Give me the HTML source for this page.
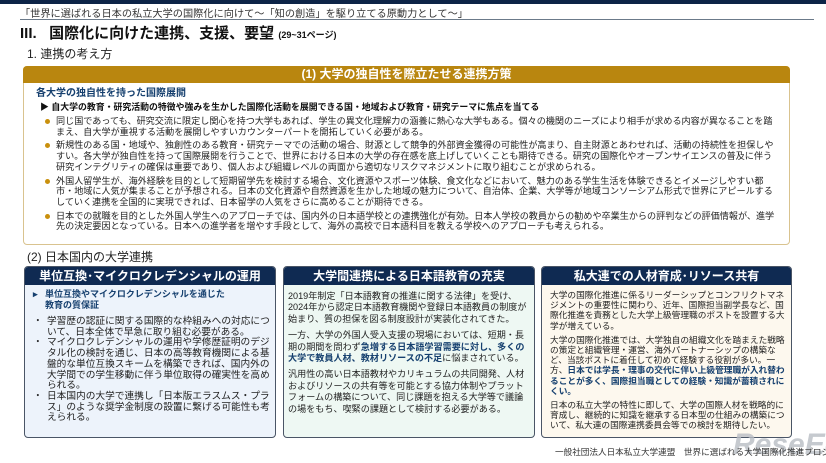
<!DOCTYPE html>
<html><head><meta charset="utf-8"><style>
*{margin:0;padding:0;box-sizing:border-box}
body{width:826px;height:463px;background:#fff;position:relative;overflow:hidden;font-family:"Liberation Sans","Noto Sans CJK JP",sans-serif;color:#222}
.abs{position:absolute}
.topbar{left:0;top:0;width:826px;height:4px;background:#0d2447}
.sub{left:20px;top:5px;font-size:10.2px;color:#333;white-space:nowrap}
.rule{left:20px;top:19px;width:794px;height:1px;background:#6b7a8a}
.h1{left:20px;top:22px;font-size:15px;font-weight:bold;color:#111;white-space:nowrap}
.h1 small{font-size:9px;font-weight:bold}
.h2{left:27px;top:45px;font-size:12px;color:#222;white-space:nowrap}
.gold{left:23px;top:66px;width:767px;height:179px;border:1px solid #d9c38f;border-radius:4px;background:#fff}
.goldh{left:23px;top:66px;width:767px;height:17px;background:#b9860f;border-radius:4px 4px 0 0;color:#fff;font-weight:bold;font-size:12px;text-align:center;line-height:17px}
.blue{color:#16406f;font-weight:bold}
.t1{left:36px;top:84px;font-size:10px}
.t2{left:40px;top:100px;font-size:8.9px;font-weight:bold;color:#111;white-space:nowrap}
ul.b{left:44px;top:116px;width:734px;list-style:none;font-size:9.1px;line-height:10.6px;color:#222}
ul.b li{position:relative;padding-left:12px;margin-bottom:3.3px}
ul.b li:before{content:"";position:absolute;left:1px;top:3px;width:5px;height:5px;border-radius:50%;background:#c9900d}
.h3{left:27px;top:248px;font-size:12px;white-space:nowrap}
.box{top:266px;height:172px;border:1px solid #4a5566;border-radius:4px;overflow:hidden}
.box .hd{height:18px;background:#0f2a52;color:#fff;font-weight:bold;font-size:12px;text-align:center;line-height:18px}
.b1{left:24px;width:252px;background:#edf3fb}
.b2{left:283px;width:252px;background:#eef8f3}
.b3{left:541px;width:251px;background:#fdf8ee}
.b1 .c{padding:4px 5px 0 8px;font-size:9.7px;line-height:10.7px}
.b1 .c .tri{font-weight:bold;color:#16406f;padding-left:12px;position:relative;margin-bottom:6px;font-size:9px;line-height:11px}
.b1 .c .tri:before{content:"▸";position:absolute;left:0;top:0;color:#16406f}
.b1 ul{list-style:none}
.b1 li{position:relative;padding-left:14px}
.b1 li:before{content:"・";position:absolute;left:0}
.b2 .c{padding:6px 3px 0 4px;font-size:9.1px;line-height:11.4px}
.b2 .c p{margin-bottom:5px}
.b3 .c{padding:5px 3px 0 8px;font-size:8.7px;line-height:10.2px}
.b3 .c p{margin-bottom:4px}
.foot{left:555px;top:446px;width:271px;overflow:hidden;font-size:8.6px;color:#333;white-space:nowrap}
.logo{left:733px;top:428px;width:93px;overflow:hidden;font-size:30px;font-weight:bold;color:#b9bdc4;font-style:italic;opacity:.8;white-space:nowrap}
</style></head><body>
<div class="abs topbar"></div>
<div class="abs sub">「世界に選ばれる日本の私立大学の国際化に向けて～「知の創造」を駆り立てる原動力として～」</div>
<div class="abs rule"></div>
<div class="abs h1">III.&nbsp;&nbsp; 国際化に向けた連携、支援、要望 <small>(29~31ページ)</small></div>
<div class="abs h2">1. 連携の考え方</div>
<div class="abs gold"></div>
<div class="abs goldh">(1) 大学の独自性を際立たせる連携方策</div>
<div class="abs t1 blue">各大学の独自性を持った国際展開</div>
<div class="abs t2">▶ 自大学の教育・研究活動の特徴や強みを生かした国際化活動を展開できる国・地域および教育・研究テーマに焦点を当てる</div>
<ul class="abs b">
<li>同じ国であっても、研究交流に限定し関心を持つ大学もあれば、学生の異文化理解力の涵養に熱心な大学もある。個々の機関のニーズにより相手が求める内容が異なることを踏まえ、自大学が重視する活動を展開しやすいカウンターパートを開拓していく必要がある。</li>
<li>新規性のある国・地域や、独創性のある教育・研究テーマでの活動の場合、財源として競争的外部資金獲得の可能性が高まり、自主財源とあわせれば、活動の持続性を担保しやすい。各大学が独自性を持って国際展開を行うことで、世界における日本の大学の存在感を底上げしていくことも期待できる。研究の国際化やオープンサイエンスの普及に伴う研究インテグリティの確保は重要であり、個人および組織レベルの両面から適切なリスクマネジメントに取り組むことが求められる。</li>
<li>外国人留学生が、海外経験を目的として短期留学先を検討する場合、文化資源やスポーツ体験、食文化などにおいて、魅力のある学生生活を体験できるとイメージしやすい都市・地域に人気が集まることが予想される。日本の文化資源や自然資源を生かした地域の魅力について、自治体、企業、大学等が地域コンソーシアム形式で世界にアピールするしていく連携を全国的に実現できれば、日本留学の人気をさらに高めることが期待できる。</li>
<li>日本での就職を目的とした外国人学生へのアプローチでは、国内外の日本語学校との連携強化が有効。日本人学校の教員からの勧めや卒業生からの評判などの評価情報が、進学先の決定要因となっている。日本への進学者を増やす手段として、海外の高校で日本語科目を教える学校へのアプローチも考えられる。</li>
</ul>
<div class="abs h3">(2) 日本国内の大学連携</div>
<div class="abs box b1"><div class="hd">単位互換･マイクロクレデンシャルの運用</div><div class="c">
<div class="tri">単位互換やマイクロクレデンシャルを通じた<br>教育の質保証</div>
<ul>
<li>学習歴の認証に関する国際的な枠組みへの対応について、日本全体で早急に取り組む必要がある。</li>
<li>マイクロクレデンシャルの運用や学修歴証明のデジタル化の検討を通じ、日本の高等教育機関による基盤的な単位互換スキームを構築できれば、国内外の大学間での学生移動に伴う単位取得の確実性を高められる。</li>
<li>日本国内の大学で連携し「日本版エラスムス・プラス」のような奨学金制度の設置に繋げる可能性も考えられる。</li>
</ul></div></div>
<div class="abs box b2"><div class="hd">大学間連携による日本語教育の充実</div><div class="c">
<p>2019年制定「日本語教育の推進に関する法律」を受け、2024年から認定日本語教育機関や登録日本語教員の制度が始まり、質の担保を図る制度設計が実装化されてきた。</p>
<p>一方、大学の外国人受入支援の現場においては、短期・長期の期間を問わず<span class="blue">急増する日本語学習需要に対し、多くの大学で教員人材、教材リソースの不足</span>に悩まされている。</p>
<p>汎用性の高い日本語教材やカリキュラムの共同開発、人材およびリソースの共有等を可能とする協力体制やプラットフォームの構築について、同じ課題を抱える大学等で議論の場をもち、喫緊の課題として検討する必要がある。</p>
</div></div>
<div class="abs box b3"><div class="hd">私大連での人材育成･リソース共有</div><div class="c">
<p>大学の国際化推進に係るリーダーシップとコンフリクトマネジメントの重要性に関わり、近年、国際担当副学長など、国際化推進を責務とした大学上級管理職のポストを設置する大学が増えている。</p>
<p>大学の国際化推進では、大学独自の組織文化を踏まえた戦略の策定と組織管理・運営、海外パートナーシップの構築など、当該ポストに着任して初めて経験する役割が多い。一方、<span class="blue">日本では学長・理事の交代に伴い上級管理職が入れ替わることが多く、国際担当職としての経験・知識が蓄積されにくい。</span></p>
<p>日本の私立大学の特性に即して、大学の国際人材を戦略的に育成し、継続的に知識を継承する日本型の仕組みの構築について、私大連の国際連携委員会等での検討を期待したい。</p>
</div></div>
<div class="abs logo">ReseEd</div>
<div class="abs foot">一般社団法人日本私立大学連盟　世界に選ばれる大学国際化推進プロジェクト 67</div>
</body></html>
